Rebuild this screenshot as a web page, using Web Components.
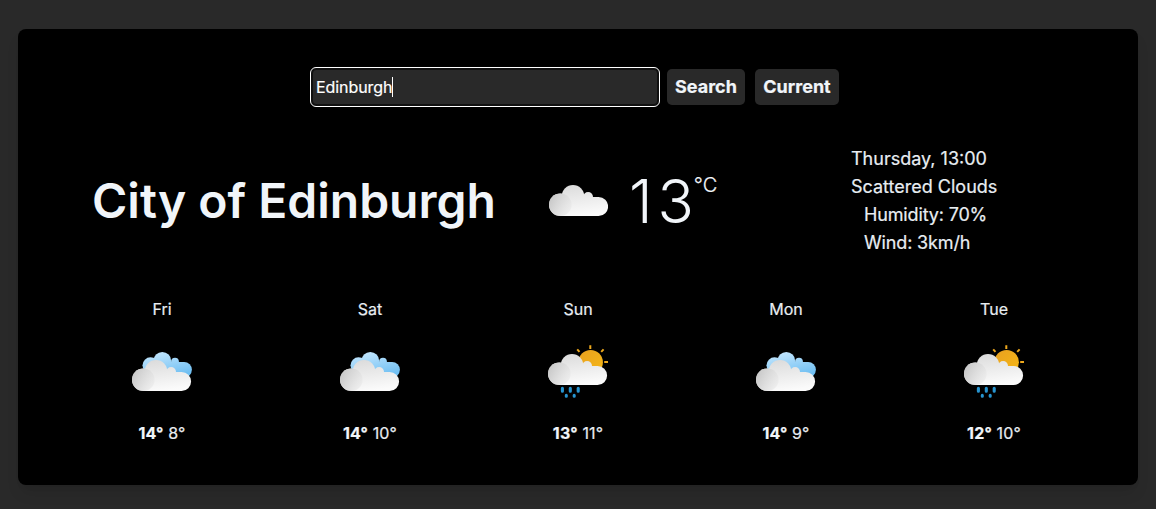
<!DOCTYPE html>
<html lang="en">
<head>
<meta charset="utf-8">
<title>Weather</title>
<style>
html,body{height:100%}
body{margin:0;background:#292929;color:#f1f5f9;font-family:Inter,"Liberation Sans",sans-serif;overflow:hidden}
</style>
</head>
<body>
<weather-card>
  <search-bar slot="search" value="Edinburgh"></search-bar>
  <current-weather slot="current" city="City of Edinburgh" temp="13" icon="cloud">
    <span>Thursday, 13:00</span>
    <span>Scattered Clouds</span>
    <span class="indent">Humidity: 70%</span>
    <span class="indent">Wind: 3km/h</span>
  </current-weather>
  <forecast-day day="Fri" high="14°" low="8°" icon="broken"></forecast-day>
  <forecast-day day="Sat" high="14°" low="10°" icon="broken"></forecast-day>
  <forecast-day day="Sun" high="13°" low="11°" icon="rain"></forecast-day>
  <forecast-day day="Mon" high="14°" low="9°" icon="broken"></forecast-day>
  <forecast-day day="Tue" high="12°" low="10°" icon="rain"></forecast-day>
</weather-card>
<script>
const define = (name, render) => customElements.define(name, class extends HTMLElement {
  constructor() { super(); this.attachShadow({ mode: 'open' }); }
  connectedCallback() { this.shadowRoot.innerHTML = render(k => this.getAttribute(k)); }
});

const cloud = `
  <g fill="url(#body)"><circle cx="11.3" cy="19.7" r="11.3"/><circle cx="24" cy="11.2" r="11.2"/><circle cx="39.1" cy="12" r="4.9"/>
  <path d="M11.3 31V14L24 11H36V12H49.6A9.5 9.5 0 0 1 49.6 31Z"/></g>
  <circle cx="11.3" cy="19.7" r="11.3" fill="url(#puff)"/>`;
const defs = `<defs>
  <linearGradient id="body" gradientUnits="userSpaceOnUse" x1="24" y1="0" x2="28" y2="31"><stop stop-color="#dcdcdc"/><stop offset="1" stop-color="#fbfbfb"/></linearGradient>
  <linearGradient id="puff" gradientUnits="userSpaceOnUse" x1="1" y1="15" x2="21" y2="24"><stop stop-color="#c9c9c9"/><stop offset="1" stop-color="#e4e4e4" stop-opacity=".5"/></linearGradient>
  <linearGradient id="sky" gradientUnits="userSpaceOnUse" x1="30" y1="10" x2="36" y2="36"><stop stop-color="#bfe4fd"/><stop offset="1" stop-color="#6fbff2"/></linearGradient>
  <linearGradient id="sun" x1="0" y1="0" x2="1" y2="1"><stop stop-color="#e8a020"/><stop offset="1" stop-color="#f6b816"/></linearGradient>
</defs>`;
const art = {
  cloud: `<g transform="translate(1 14)">${cloud}</g>`,
  broken: `<g fill="url(#sky)"><circle cx="18.5" cy="23.3" r="8"/><circle cx="30.3" cy="18.8" r="8.9"/><circle cx="43" cy="19.6" r="3.9"/>
    <path d="M18 20H52.2A7.7 7.7 0 0 1 52.2 35.4H18Z"/></g>
    <g transform="translate(0 18)">${cloud}</g>`,
  rain: `<circle cx="42.6" cy="20.3" r="12.3" fill="url(#sun)"/>
    <path d="M42.3 3.2v3.8M29.2 7.4l2.3 2.5M55.6 7.4l-2.4 2.5M56.2 20.1h3.8" stroke="#eea91d" stroke-width="2"/>
    <g transform="translate(0 12)">${cloud}</g>
    <path d="M14.4 46.2v3.1M22.3 46.2v3.1M30.2 46.2v3.1M18.3 53.4v.9M26.2 53.4v.9" stroke="#2794d0" stroke-width="3.1" stroke-linecap="round"/>`
};

define('weather-icon', a => `
  <style>:host{display:block;width:60px;height:60px}svg{display:block}</style>
  <svg width="60" height="60" viewBox="0 0 60 60">${defs}${art[a('name')]}</svg>`);

define('search-bar', a => `
  <style>
    :host{display:flex;justify-content:center;gap:10px;height:36px}
    .field{box-sizing:border-box;width:346px;margin-right:-1px;border:1px solid #101010;border-radius:4px;outline:1px solid #fff;outline-offset:1px;background:#292929;
      box-shadow:0 0 0 1px #101010;
      padding:0 3px;display:flex;align-items:center;font-size:16px;color:#fff}
    .field span{letter-spacing:-.08px;-webkit-text-stroke:.2px}
    .caret{width:1px;height:20px;background:#fff}
    button{box-sizing:border-box;border:0;border-radius:5px;background:#292929;color:#f1f5f9;font:700 18px/36px Inter,sans-serif;padding:0;-webkit-text-stroke:.2px}
    .s{width:78px}.c{width:84px}
  </style>
  <div class="field" role="textbox"><span>${a('value')}</span><i class="caret"></i></div>
  <button class="s">Search</button><button class="c">Current</button>`);

define('current-weather', a => `
  <style>
    :host{display:flex;align-items:center;height:112px}
    h1{margin:0 1px 0 -1px;width:455px;font-size:48px;line-height:56px;font-weight:600;white-space:nowrap}
    .temp{display:flex;align-items:flex-start;margin-left:21px;width:222px;font-size:60px;line-height:60px;font-weight:300}
    .lead{letter-spacing:4.8px}
    sup{font-size:20px;line-height:28px;font-weight:300;-webkit-text-stroke:.2px}
    .info{display:flex;flex-direction:column;font-size:18px;line-height:28px;color:#e8edf2;-webkit-text-stroke:.2px}
    ::slotted(.indent){padding-left:13px;letter-spacing:-.15px}
  </style>
  <h1>${a('city')}</h1>
  <weather-icon name="${a('icon')}"></weather-icon>
  <div class="temp"><span><span class="lead">${a('temp').slice(0, -1)}</span>${a('temp').slice(-1)}</span><sup>°C</sup></div>
  <div class="info"><slot></slot></div>`);

define('forecast-day', a => `
  <style>
    :host{display:flex;flex-direction:column;align-items:center;font-size:16px;line-height:24px;color:#e8edf2;-webkit-text-stroke:.2px}
    weather-icon{margin:21px 0 19px}
    b{font-weight:700;color:#f1f5f9}
    .range{letter-spacing:.15px}
  </style>
  <span>${a('day')}</span>
  <weather-icon name="${a('icon')}"></weather-icon>
  <span class="range"><b>${a('high')}</b> ${a('low')}</span>`);

define('weather-card', () => `
  <style>
    :host{display:flex;flex-direction:column;box-sizing:border-box;margin:29px 18px 0;height:456px;padding:40px;border-radius:8px;background:#000;
      box-shadow:0 10px 15px -3px rgba(0,0,0,.1),0 4px 6px -4px rgba(0,0,0,.1)}
    .search{padding-right:5px}
    .current{margin:40px 0 0 35px}
    .days{display:grid;grid-template-columns:repeat(5,1fr);margin-top:40px}
  </style>
  <div class="search"><slot name="search"></slot></div>
  <div class="current"><slot name="current"></slot></div>
  <div class="days"><slot></slot></div>`);
</script>
</body>
</html>
